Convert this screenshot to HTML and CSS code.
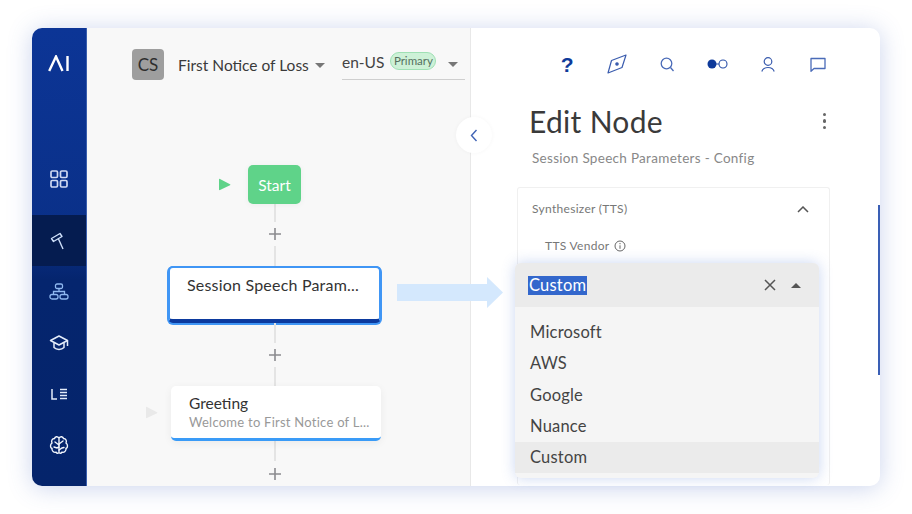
FILE: index.html
```html
<!DOCTYPE html>
<html lang="en">
<head>
<meta charset="utf-8">
<title>Edit Node</title>
<link rel="stylesheet" href="styles.css">
</head>
<body>
<div class="app">
  <nav class="sidebar">
    <div class="logo">
      <svg width="22" height="17" viewBox="0 0 22 17" fill="none" stroke="#fff" stroke-width="2.4"><path d="M1.2 16 8 1.5 14.5 16"/><path d="M19.5 1v15"/></svg>
    </div>
    <div class="nav-item nav-grid">
      <svg width="20" height="20" viewBox="0 0 20 20" fill="none" stroke="#cfd9f2" stroke-width="1.7"><rect x="2" y="2" width="6.5" height="6.5" rx="1.2"/><rect x="11.5" y="2" width="6.5" height="6.5" rx="1.2"/><rect x="2" y="11.5" width="6.5" height="6.5" rx="1.2"/><rect x="11.5" y="11.5" width="6.5" height="6.5" rx="1.2"/></svg>
    </div>
    <div class="nav-item nav-active">
      <svg width="20" height="20" viewBox="0 0 20 20" fill="none" stroke="#cfe0fa" stroke-width="1.4" stroke-linejoin="round"><path d="M2.5 7.5 11 2.5l2 3-8.5 5z"/><path d="M9.5 8 14 18"/></svg>
    </div>
    <div class="nav-item">
      <svg width="20" height="18" viewBox="0 0 20 18" fill="none" stroke="#8fb8f0" stroke-width="1.3"><rect x="6.5" y="1" width="7" height="4.5" rx="1.5"/><path d="M10 5.500v3M4.500 11V8.500h11V11"/><rect x="1" y="11.500" width="8" height="4.500" rx="2"/><rect x="11" y="11.500" width="8" height="4.500" rx="2"/></svg>
    </div>
    <div class="nav-item">
      <svg width="20" height="18" viewBox="0 0 20 18" fill="none" stroke="#e4ecfa" stroke-width="1.5" stroke-linejoin="round"><path d="M10 2 1.500 6.500 10 11l8.500-4.500z"/><path d="M5 9v4.500c2.500 2.500 7.500 2.500 10 0V9"/><path d="M18.500 6.500V12"/></svg>
    </div>
    <div class="nav-item">
      <svg width="16" height="12" viewBox="0 0 16 12" fill="none" stroke="#e4ecfa" stroke-width="1.5"><path d="M1 1v10h5"/><path d="M9 1.500h7M9 4.500h7M9 7.500h7M9 10.500h7"/></svg>
    </div>
    <div class="nav-item">
      <svg width="20" height="20" viewBox="0 0 20 20" fill="none" stroke="#f1f5fc" stroke-width="1.4" stroke-linecap="round"><path d="M10 3V17.500M10 3C8.500 1 6 1.500 5.500 3.500 3 3.500 2 6 3 8 1 9.500 1 12.500 3 13.500 2.500 16 5 18 7 17.200 8 18.500 9.500 18.500 10 17.500 10.500 18.500 12 18.500 13 17.200 15 18 17.500 16 17 13.500 19 12.500 19 9.500 17 8 18 6 17 3.500 14.500 3.500 14 1.500 11.500 1 10 3Z"/><path d="M6 7l4 3M14 6l-4 3M5 12l3 1 2-1M15 12.500l-2 .500-3 2"/></svg>
    </div>
  </nav>

  <section class="canvas">
    <header class="canvas-head">
      <div class="avatar">CS</div>
      <div class="flow-name">First Notice of Loss<span class="caret caret-name"></span></div>
      <div class="lang">
        <span class="lang-code">en-US</span>
        <span class="pill">Primary</span>
        <span class="caret caret-lang"></span>
      </div>
    </header>
    <div class="flow">
      <div class="node-start">
        <svg class="play play-green" width="13" height="13" viewBox="0 0 13 13"><path d="M1 1.500v10c0 .600.500.800 1 .500l10-4.700c.500-.300.500-.800 0-1.100L2 1c-.500-.300-1-.100-1 .500z"/></svg>
        Start
      </div>
      <div class="link">
        <span class="seg seg-a"></span>
        <svg class="plus" width="12" height="12" viewBox="0 0 12 12" stroke="#8b8b8f" stroke-width="1.6"><path d="M6 0v12M0 6h12"/></svg>
        <span class="seg seg-b"></span>
      </div>
      <div class="node node-selected">
        <div class="node-title">Session Speech Param...</div>
      </div>
      <div class="link link-2">
        <span class="seg seg-a2"></span>
        <svg class="plus" width="12" height="12" viewBox="0 0 12 12" stroke="#8b8b8f" stroke-width="1.6"><path d="M6 0v12M0 6h12"/></svg>
        <span class="seg seg-b2"></span>
      </div>
      <div class="node node-greeting">
        <svg class="play play-gray" width="13" height="13" viewBox="0 0 13 13"><path d="M1 1.500v10c0 .600.500.800 1 .500l10-4.700c.500-.300.500-.800 0-1.100L2 1c-.500-.300-1-.100-1 .500z"/></svg>
        <div class="greet-title">Greeting</div>
        <div class="greet-sub">Welcome to First Notice of L...</div>
      </div>
      <div class="link link-3">
        <span class="seg seg-a3"></span>
        <svg class="plus" width="12" height="12" viewBox="0 0 12 12" stroke="#8b8b8f" stroke-width="1.6"><path d="M6 0v12M0 6h12"/></svg>
      </div>
    </div>
    <div class="collapse">
      <svg width="8" height="13" viewBox="0 0 8 13" fill="none" stroke="#3f63b5" stroke-width="1.4"><path d="M6.500 1 1.500 6.500l5 5.500"/></svg>
    </div>
  </section>

  <svg class="big-arrow" width="106" height="31" viewBox="0 0 106 31"><path fill="#d4e8fd" d="M0 7h90V0l16 15.500L90 31v-7H0z"/></svg>

  <section class="panel">
    <div class="toolbar">
      <span class="tool tool-help">?</span>
      <svg class="tool" width="20" height="20" viewBox="0 0 20 20" fill="none" stroke="#3a5cae" stroke-width="1.2" stroke-linejoin="round"><path d="M19 1 4.500 6.500 1 19l14-5.500z"/><circle cx="10" cy="10" r="1.200" fill="#3a5cae"/></svg>
      <svg class="tool" width="14" height="15" viewBox="0 0 14 15" fill="none" stroke="#4a6bb8" stroke-width="1.300"><circle cx="6.500" cy="6.500" r="5.300"/><path d="M10.500 10.500 13.500 14"/></svg>
      <svg class="tool" width="21" height="10" viewBox="0 0 21 10"><circle cx="5" cy="5" r="4.500" fill="#0e3a9a"/><circle cx="16" cy="5" r="4" fill="none" stroke="#2a50a8" stroke-width="1.100"/><path d="M9 5h3" stroke="#2a50a8"/></svg>
      <svg class="tool" width="14" height="15" viewBox="0 0 14 15" fill="none" stroke="#3a5cae" stroke-width="1.200"><circle cx="7" cy="4.500" r="3.800"/><path d="M.800 14.500c1-3 3.200-4 6.200-4s5.200 1 6.200 4"/></svg>
      <svg class="tool" width="16" height="15" viewBox="0 0 16 15" fill="none" stroke="#4a6bb8" stroke-width="1.300" stroke-linejoin="round"><path d="M1 1.500h14v10H4L1 14.200z"/></svg>
    </div>
    <div class="title-row">
      <h1 class="title">Edit Node</h1>
      <span class="kebab"><i></i><i></i><i></i></span>
    </div>
    <p class="subtitle">Session Speech Parameters - Config</p>
    <div class="card">
      <div class="card-head">
        <span>Synthesizer (TTS)</span>
        <svg width="12" height="7" viewBox="0 0 12 7" fill="none" stroke="#555" stroke-width="1.500"><path d="M1 6l5-5 5 5"/></svg>
      </div>
      <div class="field-label">
        TTS Vendor
        <svg width="12" height="12" viewBox="0 0 12 12" fill="none" stroke="#666" stroke-width="1"><circle cx="6" cy="6" r="5"/><path d="M6 5.300v3.500M6 3v1.200"/></svg>
      </div>
    </div>
    <div class="scrollbar"></div>
    <div class="dropdown">
      <div class="dd-head">
        <span class="dd-value">Custom</span>
        <svg class="dd-x" width="12" height="12" viewBox="0 0 12 12" stroke="#555" stroke-width="1.500"><path d="M1 1l10 10M11 1 1 11"/></svg>
        <span class="caret caret-up"></span>
      </div>
      <ul class="dd-list">
        <li>Microsoft</li>
        <li>AWS</li>
        <li>Google</li>
        <li>Nuance</li>
        <li class="dd-on">Custom</li>
      </ul>
    </div>
  </section>
</div>
</body>
</html>
```
FILE: styles.css
```css
* { box-sizing: border-box; }
html, body { margin: 0; height: 100%; background: #fff; }
body { padding: 28px 32px; font-family: "Lato", "Noto Sans", sans-serif; color: #333; overflow: hidden; }
.app {
  position: relative; display: flex; width: 848px; height: 458px;
  border-radius: 10px; background: #fff;
  box-shadow: 0 2px 24px rgba(70, 100, 190, .28);
}
.sidebar {
  flex: 0 0 55px; display: flex; flex-direction: column; align-items: stretch;
  border-radius: 10px 0 0 10px; overflow: hidden;
  background: linear-gradient(#0c3596, #0a3088 45%, #05256e 55%, #05246b);
  border-right: 1px solid #3a5fae;
}
.logo { height: 72px; display: flex; align-items: center; justify-content: center; padding-top: 0; margin-bottom: 55px; }
.logo svg { margin-top: -1px; }
.nav-item { height: 51px; display: flex; align-items: center; justify-content: center; }
.nav-grid { margin-bottom: 11px; margin-top: -2px; }
.nav-active { background: #051c50; }

.canvas { position: relative; flex: 0 0 384px; background: #f8f8f8; border-right: 1px solid #e8e8e8; }
.canvas-head { display: flex; align-items: flex-start; padding: 21px 0 0 45px; height: 137px; }
.avatar {
  width: 32px; height: 31px; border-radius: 4px; background: #9e9e9e; color: #2e2e2e;
  font-size: 17px; display: flex; align-items: center; justify-content: center;
}
.flow-name { font-size: 15.500px; margin: 6px 0 0 14px; color: #3a3a3a; width: 164px; white-space: nowrap; display: flex; align-items: center; height: 20px; }
.caret { display: inline-block; width: 0; height: 0; border-left: 5px solid transparent; border-right: 5px solid transparent; border-top: 5px solid #777; }
.caret-name { margin-left: 6px; margin-top: 0; }
.lang { width: 123px; height: 31px; border-bottom: 1px solid #cfcfcf; display: flex; align-items: flex-start; }
.lang-code { font-size: 15.500px; margin-top: 4px; color: #444; }
.pill {
  margin: 3px 0 0 6px; height: 18px; width: 46px; border-radius: 9px;
  background: #cdf1d7; border: 1px solid #9fe0b4; color: #55705e;
  font-size: 11.500px; line-height: 15px; text-align: center;
}
.caret-lang { margin: 13px 0 0 12px; }

.flow { width: 213px; margin-left: 81px; display: flex; flex-direction: column; align-items: center; }
.node-start {
  position: relative; width: 53px; height: 39px; background: #5fd389; border-radius: 5px;
  color: #fff; font-size: 15.500px; display: flex; align-items: center; justify-content: center;
  box-shadow: 0 1px 6px rgba(0,0,0,.05);
}
.play { position: absolute; left: -30px; top: 13px; }
.play-green { fill: #5fd389; }
.play-gray { fill: #e9e9e9; left: -26px; top: 20px; }
.link { display: flex; flex-direction: column; align-items: center; width: 100%; }
.seg { display: block; width: 2px; background: #e4e4e4; }
.seg-a { height: 18px; margin-bottom: 6px; }
.seg-b { height: 20px; margin-top: 6px; }
.seg-a2 { height: 20px; margin-bottom: 6px; }
.seg-b2 { height: 19px; margin-top: 6px; }
.seg-a3 { height: 20px; margin-bottom: 7px; }
.link-3 { height: 42px; overflow: hidden; }
.node { background: #fff; width: 100%; }
.node-selected {
  height: 57px; border: 2px solid #4096f5; border-bottom: 4px solid #0c3a9e; border-radius: 5px;
  box-shadow: 0 1px 0 1px #4096f5; padding: 6px 0 0 17px;
}
.node-title { font-size: 16px; line-height: 21px; color: #333; letter-spacing: .2px; white-space: nowrap; }
.node-greeting {
  position: relative; width: 210px; height: 55px; margin-left: 3px; border-radius: 5px;
  border-bottom: 3px solid #3a9bf7; padding: 7px 0 0 18px;
  box-shadow: 0 2px 8px rgba(0,0,0,.06);
}
.greet-title { font-size: 15.500px; line-height: 20px; color: #333; }
.greet-sub { font-size: 13px; line-height: 16px; margin-top: 1px; color: #999; letter-spacing: .25px; white-space: nowrap; }
.collapse {
  position: absolute; left: 369px; top: 89px; width: 36px; height: 36px; border-radius: 50%;
  background: #fff; display: flex; align-items: center; justify-content: center;
  box-shadow: 0 0 4px rgba(0,0,0,.04); padding-left: 0;
}
.big-arrow { position: absolute; left: 365px; top: 249px; z-index: 3; }

.panel { position: relative; flex: 1; padding: 0; border-radius: 0 10px 10px 0; }
.toolbar { position: relative; height: 72px; display: grid; grid-template-columns: repeat(6, 50.200px); justify-items: center; align-items: center; padding: 0 0 0 71px; }
.tool-help { font: 700 21px/1 "Liberation Sans", sans-serif; color: #0e3a9a; }
.title-row { display: flex; justify-content: space-between; align-items: center; padding: 0 54px 0 58px; height: 42px; }
.title { margin: 0; font-size: 30px; font-weight: 400; color: #3a3a3a; letter-spacing: .3px; }
.kebab { display: flex; flex-direction: column; gap: 3px; }
.kebab i { display: block; width: 3.500px; height: 3.500px; border-radius: 50%; background: #666; }
.subtitle { margin: 7px 0 0 61px; font-size: 13.500px; line-height: 18px; color: #888; letter-spacing: .3px; }
.card {
  margin: 20px 0 0 46px; width: 313px; height: 298px;
  border: 1px solid #f0f0f0; border-bottom: 0; border-radius: 3px;
}
.card-head { display: flex; justify-content: space-between; align-items: center; padding: 13px 20px 0 14px; font-size: 12px; color: #777; letter-spacing: .3px; line-height: 16px; }
.field-label { display: flex; align-items: center; gap: 5px; margin: 21px 0 0 27px; font-size: 12px; color: #777; line-height: 16px; letter-spacing: .3px; }
.scrollbar { position: absolute; right: 0; top: 177px; width: 2px; height: 170px; background: #3a5fb5; }
.dropdown {
  position: absolute; left: 44px; top: 235px; width: 304px; height: 215px; z-index: 2;
  background: #f5f5f5; border-radius: 6px; box-shadow: 0 0 14px rgba(70, 110, 210, .28);
  overflow: hidden;
}
.dd-head { height: 44px; background: #ebebeb; display: flex; align-items: center; padding: 0 18px 0 13px; }
.dd-value { background: #3367cc; color: #fff; font-size: 16.500px; line-height: 19px; padding: 0 1px; letter-spacing: .2px; }
.dd-x { margin-left: auto; }
.caret-up { border-top: 0; border-bottom: 5px solid #555; margin-left: 15px; }
.dd-list { list-style: none; margin: 10px 0 0; padding: 0; }
.dd-list li { height: 31.300px; line-height: 31px; padding-left: 15px; font-size: 16.500px; color: #444; letter-spacing: .2px; }
.dd-list .dd-on { background: #ebebeb; }
```
